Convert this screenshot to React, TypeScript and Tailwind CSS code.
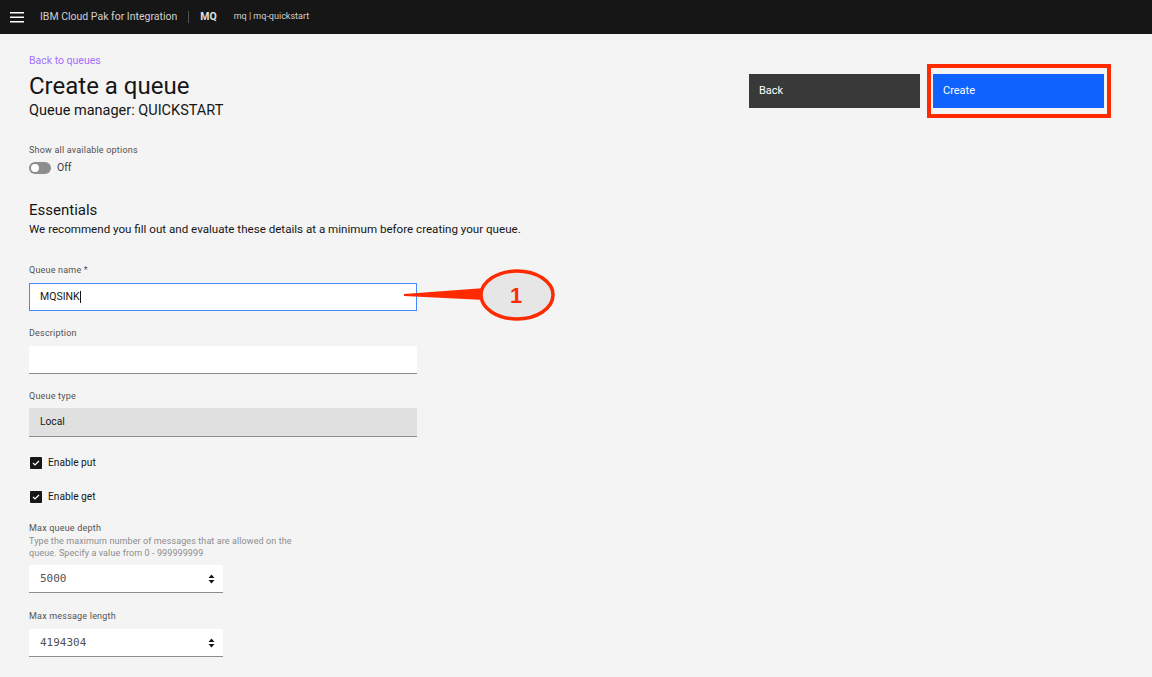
import React from "react";

const font = { fontFamily: "Roboto, 'Noto Sans', sans-serif" };

function Label({ children }: { children: React.ReactNode }) {
  return <div className="text-[9px] leading-[12px] text-[#525252] tracking-[0.2px]">{children}</div>;
}

function Check({ label }: { label: string }) {
  return (
    <div className="flex items-center gap-[6px] h-[14px]">
      <div className="w-[12px] h-[12px] bg-[#161616] flex items-center justify-center rounded-[1px]">
        <svg width="8" height="6" viewBox="0 0 8 6">
          <path d="M1 3 L3 5 L7 1" stroke="#fff" strokeWidth="1.2" fill="none" />
        </svg>
      </div>
      <span className="text-[10.2px] leading-[12px] text-[#161616]">{label}</span>
    </div>
  );
}

function Spinner() {
  return (
    <svg width="7" height="10" viewBox="0 0 7 10">
      <path d="M3.5 0.5 L6.5 4 L0.5 4 Z" fill="#161616" />
      <path d="M3.5 9.5 L6.5 6 L0.5 6 Z" fill="#161616" />
    </svg>
  );
}

function NumberInput({ value }: { value: string }) {
  return (
    <div className="w-[194px] h-[28px] bg-white border-b border-[#8d8d8d] flex items-center justify-between pl-[11px] pr-[8px]">
      <span className="text-[11px] leading-[12px] text-[#525252]" style={{ fontFamily: "'DejaVu Sans Mono', monospace" }}>{value}</span>
      <Spinner />
    </div>
  );
}

export default function App() {
  return (
    <div className="w-[1152px] h-[677px] bg-[#f4f4f4] overflow-hidden relative" style={font}>
      <header className="h-[34px] bg-[#161616] flex items-center">
        <div className="w-[34px] flex items-center justify-center">
          <svg width="14" height="12" viewBox="0 0 14 12">
            <rect x="0" y="1" width="14" height="1.5" fill="#fff" />
            <rect x="0" y="5.5" width="14" height="1.5" fill="#fff" />
            <rect x="0" y="10" width="14" height="1.5" fill="#fff" />
          </svg>
        </div>
        <span className="ml-[6px] text-[10.5px] text-[#d0d0d0]">IBM Cloud Pak for Integration</span>
        <span className="ml-[11px] w-px h-[12px] bg-[#525252]" />
        <span className="ml-[11px] text-[10.5px] font-bold text-[#e0e0e0]">MQ</span>
        <span className="ml-[17px] text-[9px] text-[#d0d0d0]">mq | mq-quickstart</span>
      </header>

      <main className="px-[29px]">
        <div className="flex justify-between">
          <div>
            <div className="mt-[20px] text-[10.5px] leading-[13px] text-[#a56eff]">Back to queues</div>
            <h1 className="mt-[4px] text-[24px] leading-[30px] text-[#161616]">Create a queue</h1>
            <div className="text-[14.5px] leading-[20px] text-[#161616]">Queue manager: QUICKSTART</div>
          </div>
          <div className="flex mt-[40px] mr-[19px] gap-[13px]">
            <button className="w-[171px] h-[34px] bg-[#393939] text-white text-[11px] text-left pl-[10px]">Back</button>
            <button className="w-[171px] h-[34px] bg-[#0f62fe] text-white text-[11px] text-left pl-[10px]">Create</button>
          </div>
        </div>

        <div className="mt-[23px]">
          <Label>Show all available options</Label>
          <div className="mt-[6px] flex items-center gap-[6px]">
            <div className="w-[22px] h-[12px] rounded-full bg-[#8d8d8d] flex items-center pl-[2px]">
              <div className="w-[8px] h-[8px] rounded-full bg-white" />
            </div>
            <span className="text-[10.5px] leading-[12px] text-[#393939]">Off</span>
          </div>
        </div>

        <div className="mt-[26px] text-[15px] leading-[20px] text-[#161616]">Essentials</div>
        <div className="text-[11.6px] leading-[16px] text-[#161616] mt-[1px]">We recommend you fill out and evaluate these details at a minimum before creating your queue.</div>

        <div className="mt-[27px]">
          <Label>Queue name *</Label>
          <div className="mt-[7px] w-[388px] h-[28px] bg-white border border-[#4589ff] flex items-center pl-[10px]">
            <span className="text-[10.5px] leading-[12px] text-[#161616]">MQSINK</span>
            <span className="w-px h-[12px] bg-[#161616]" />
          </div>
        </div>

        <div className="mt-[16px]">
          <Label>Description</Label>
          <div className="mt-[7px] w-[388px] h-[28px] bg-white border-b border-[#8d8d8d]" />
        </div>

        <div className="mt-[16px]">
          <Label>Queue type</Label>
          <div className="mt-[6px] w-[388px] h-[29px] bg-[#e0e0e0] border-b border-[#8d8d8d] flex items-center pl-[11px]">
            <span className="text-[10.2px] leading-[12px] text-[#161616]">Local</span>
          </div>
        </div>

        <div className="mt-[19px] flex flex-col gap-[20px] pl-[1px]">
          <Check label="Enable put" />
          <Check label="Enable get" />
        </div>

        <div className="mt-[18px]">
          <Label>Max queue depth</Label>
          <div className="mt-[1px] text-[9px] leading-[12px] text-[#8d8d8d] w-[268px] tracking-[0.1px]">
            Type the maximum number of messages that are allowed on the queue. Specify a value from 0 - 999999999
          </div>
          <div className="mt-[6px]">
            <NumberInput value="5000" />
          </div>
        </div>

        <div className="mt-[17px]">
          <Label>Max message length</Label>
          <div className="mt-[7px]">
            <NumberInput value="4194304" />
          </div>
        </div>
      </main>

      {/* annotation: red highlight around Create */}
      <div className="absolute left-[927px] top-[64px] w-[184px] h-[54px] border-[4px] border-[#ff2a00]" />

      {/* annotation: callout 1 */}
      <svg className="absolute left-[395px] top-[262px]" width="170" height="66" viewBox="0 0 170 66">
        <path d="M9 32 L90 26 L90 38 L9 34 Z" fill="#ff2a00" />
        <ellipse cx="122" cy="33" rx="36" ry="24" fill="#e6e6e6" stroke="#ff2a00" strokeWidth="3.5" />
        <text x="121" y="41" textAnchor="middle" fontFamily="'Liberation Sans', Arial, sans-serif" fontWeight="700" fontSize="22" fill="#ff2a00">1</text>
      </svg>
    </div>
  );
}
